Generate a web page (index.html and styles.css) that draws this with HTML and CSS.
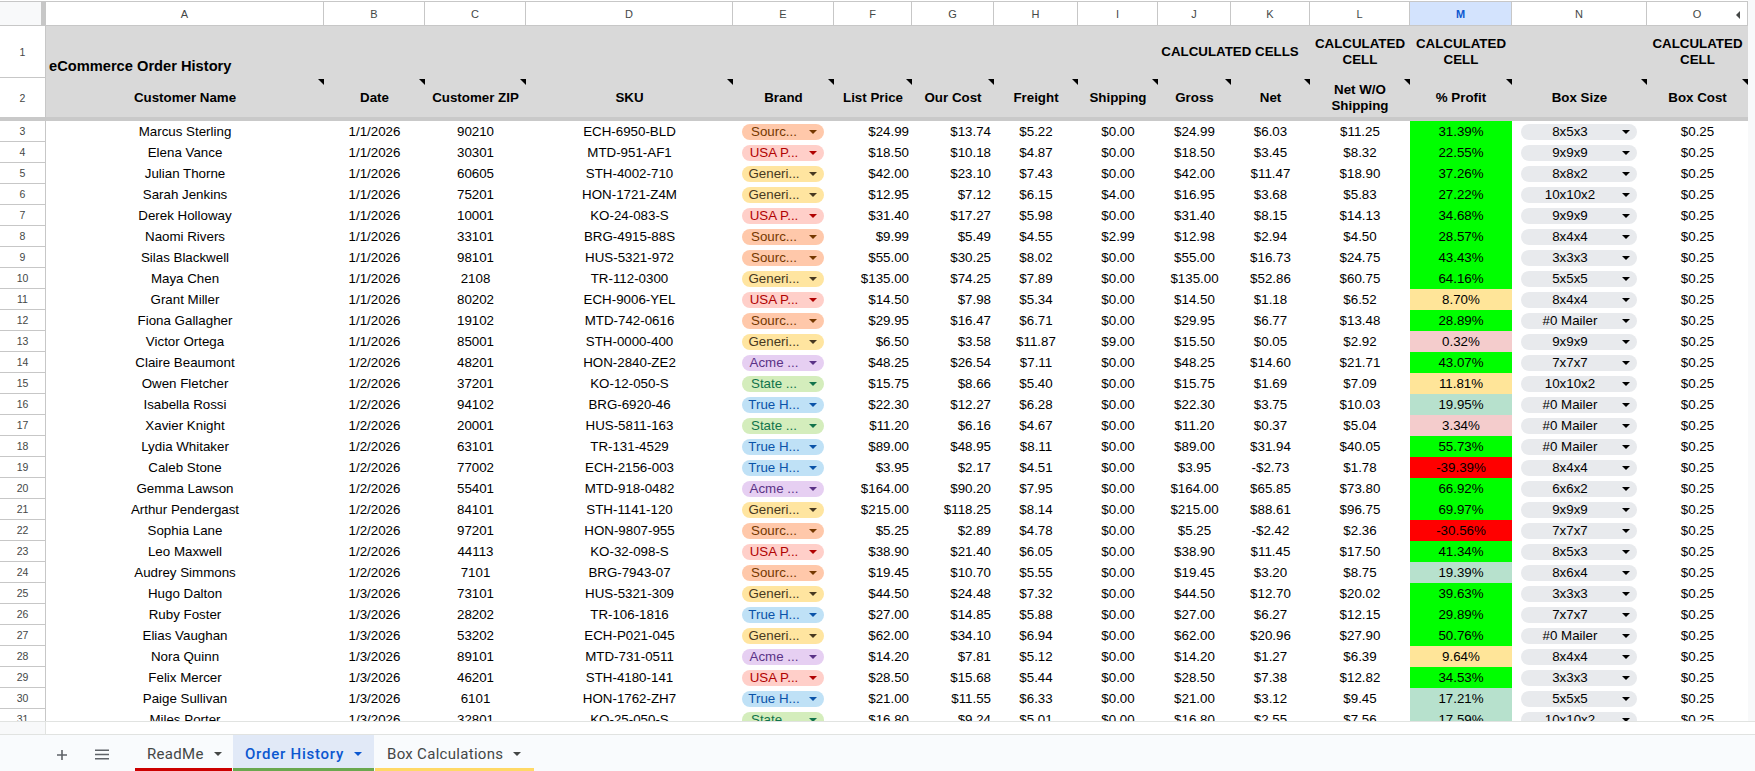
FILE: index.html
```html
<!DOCTYPE html>
<html lang="en">
<head>
<meta charset="utf-8">
<title>eCommerce Order History</title>
<link rel="stylesheet" href="styles.css">
</head>
<body>
<div class="app">
<div class="sheet-row">
<div class="sheet">
<table class="grid">
<colgroup><col class="w-gutter"><col class="w-a"><col class="w-b"><col class="w-c"><col class="w-d"><col class="w-e"><col class="w-f"><col class="w-g"><col class="w-h"><col class="w-i"><col class="w-j"><col class="w-k"><col class="w-l"><col class="w-m"><col class="w-n"><col class="w-o"></colgroup>
<thead>
<tr class="letters"><th class="corner"></th><th>A</th><th>B</th><th>C</th><th>D</th><th>E</th><th>F</th><th>G</th><th>H</th><th>I</th><th>J</th><th>K</th><th>L</th><th class="selected">M</th><th>N</th><th class="has-collapse">O</th></tr>
<tr class="banner"><th class="rownum">1</th><th class="title">eCommerce Order History</th><th colspan="8"></th><th colspan="2" class="calc calc-merged">CALCULATED CELLS</th><th class="calc">CALCULATED<br>CELL</th><th class="calc">CALCULATED<br>CELL</th><th></th><th class="calc">CALCULATED<br>CELL</th></tr>
<tr class="labels"><th class="rownum">2</th><th class="f">Customer Name</th><th class="f">Date</th><th class="f">Customer ZIP</th><th class="f">SKU</th><th class="f">Brand</th><th class="f">List Price</th><th class="f">Our Cost</th><th class="f">Freight</th><th class="f">Shipping</th><th class="f">Gross</th><th class="f">Net</th><th class="f">Net W/O<br>Shipping</th><th class="f">% Profit</th><th class="f">Box Size</th><th class="f">Box Cost</th></tr>
</thead>
<tbody>
<tr><th class="rownum">3</th><td>Marcus Sterling</td><td>1/1/2026</td><td>90210</td><td>ECH-6950-BLD</td><td><span class="chip source">Sourc...</span></td><td>$24.99</td><td>$13.74</td><td>$5.22</td><td>$0.00</td><td>$24.99</td><td>$6.03</td><td>$11.25</td><td class="hi">31.39%</td><td><span class="box">8x5x3</span></td><td>$0.25</td></tr>
<tr><th class="rownum">4</th><td>Elena Vance</td><td>1/1/2026</td><td>30301</td><td>MTD-951-AF1</td><td><span class="chip usa">USA P...</span></td><td>$18.50</td><td>$10.18</td><td>$4.87</td><td>$0.00</td><td>$18.50</td><td>$3.45</td><td>$8.32</td><td class="hi">22.55%</td><td><span class="box">9x9x9</span></td><td>$0.25</td></tr>
<tr><th class="rownum">5</th><td>Julian Thorne</td><td>1/1/2026</td><td>60605</td><td>STH-4002-710</td><td><span class="chip generic">Generi...</span></td><td>$42.00</td><td>$23.10</td><td>$7.43</td><td>$0.00</td><td>$42.00</td><td>$11.47</td><td>$18.90</td><td class="hi">37.26%</td><td><span class="box">8x8x2</span></td><td>$0.25</td></tr>
<tr><th class="rownum">6</th><td>Sarah Jenkins</td><td>1/1/2026</td><td>75201</td><td>HON-1721-Z4M</td><td><span class="chip generic">Generi...</span></td><td>$12.95</td><td>$7.12</td><td>$6.15</td><td>$4.00</td><td>$16.95</td><td>$3.68</td><td>$5.83</td><td class="hi">27.22%</td><td><span class="box">10x10x2</span></td><td>$0.25</td></tr>
<tr><th class="rownum">7</th><td>Derek Holloway</td><td>1/1/2026</td><td>10001</td><td>KO-24-083-S</td><td><span class="chip usa">USA P...</span></td><td>$31.40</td><td>$17.27</td><td>$5.98</td><td>$0.00</td><td>$31.40</td><td>$8.15</td><td>$14.13</td><td class="hi">34.68%</td><td><span class="box">9x9x9</span></td><td>$0.25</td></tr>
<tr><th class="rownum">8</th><td>Naomi Rivers</td><td>1/1/2026</td><td>33101</td><td>BRG-4915-88S</td><td><span class="chip source">Sourc...</span></td><td>$9.99</td><td>$5.49</td><td>$4.55</td><td>$2.99</td><td>$12.98</td><td>$2.94</td><td>$4.50</td><td class="hi">28.57%</td><td><span class="box">8x4x4</span></td><td>$0.25</td></tr>
<tr><th class="rownum">9</th><td>Silas Blackwell</td><td>1/1/2026</td><td>98101</td><td>HUS-5321-972</td><td><span class="chip source">Sourc...</span></td><td>$55.00</td><td>$30.25</td><td>$8.02</td><td>$0.00</td><td>$55.00</td><td>$16.73</td><td>$24.75</td><td class="hi">43.43%</td><td><span class="box">3x3x3</span></td><td>$0.25</td></tr>
<tr><th class="rownum">10</th><td>Maya Chen</td><td>1/1/2026</td><td>2108</td><td>TR-112-0300</td><td><span class="chip generic">Generi...</span></td><td>$135.00</td><td>$74.25</td><td>$7.89</td><td>$0.00</td><td>$135.00</td><td>$52.86</td><td>$60.75</td><td class="hi">64.16%</td><td><span class="box">5x5x5</span></td><td>$0.25</td></tr>
<tr><th class="rownum">11</th><td>Grant Miller</td><td>1/1/2026</td><td>80202</td><td>ECH-9006-YEL</td><td><span class="chip usa">USA P...</span></td><td>$14.50</td><td>$7.98</td><td>$5.34</td><td>$0.00</td><td>$14.50</td><td>$1.18</td><td>$6.52</td><td class="mid">8.70%</td><td><span class="box">8x4x4</span></td><td>$0.25</td></tr>
<tr><th class="rownum">12</th><td>Fiona Gallagher</td><td>1/1/2026</td><td>19102</td><td>MTD-742-0616</td><td><span class="chip source">Sourc...</span></td><td>$29.95</td><td>$16.47</td><td>$6.71</td><td>$0.00</td><td>$29.95</td><td>$6.77</td><td>$13.48</td><td class="hi">28.89%</td><td><span class="box">#0 Mailer</span></td><td>$0.25</td></tr>
<tr><th class="rownum">13</th><td>Victor Ortega</td><td>1/1/2026</td><td>85001</td><td>STH-0000-400</td><td><span class="chip generic">Generi...</span></td><td>$6.50</td><td>$3.58</td><td>$11.87</td><td>$9.00</td><td>$15.50</td><td>$0.05</td><td>$2.92</td><td class="low">0.32%</td><td><span class="box">9x9x9</span></td><td>$0.25</td></tr>
<tr><th class="rownum">14</th><td>Claire Beaumont</td><td>1/2/2026</td><td>48201</td><td>HON-2840-ZE2</td><td><span class="chip acme">Acme ...</span></td><td>$48.25</td><td>$26.54</td><td>$7.11</td><td>$0.00</td><td>$48.25</td><td>$14.60</td><td>$21.71</td><td class="hi">43.07%</td><td><span class="box">7x7x7</span></td><td>$0.25</td></tr>
<tr><th class="rownum">15</th><td>Owen Fletcher</td><td>1/2/2026</td><td>37201</td><td>KO-12-050-S</td><td><span class="chip state">State ...</span></td><td>$15.75</td><td>$8.66</td><td>$5.40</td><td>$0.00</td><td>$15.75</td><td>$1.69</td><td>$7.09</td><td class="mid">11.81%</td><td><span class="box">10x10x2</span></td><td>$0.25</td></tr>
<tr><th class="rownum">16</th><td>Isabella Rossi</td><td>1/2/2026</td><td>94102</td><td>BRG-6920-46</td><td><span class="chip true">True H...</span></td><td>$22.30</td><td>$12.27</td><td>$6.28</td><td>$0.00</td><td>$22.30</td><td>$3.75</td><td>$10.03</td><td class="ok">19.95%</td><td><span class="box">#0 Mailer</span></td><td>$0.25</td></tr>
<tr><th class="rownum">17</th><td>Xavier Knight</td><td>1/2/2026</td><td>20001</td><td>HUS-5811-163</td><td><span class="chip state">State ...</span></td><td>$11.20</td><td>$6.16</td><td>$4.67</td><td>$0.00</td><td>$11.20</td><td>$0.37</td><td>$5.04</td><td class="low">3.34%</td><td><span class="box">#0 Mailer</span></td><td>$0.25</td></tr>
<tr><th class="rownum">18</th><td>Lydia Whitaker</td><td>1/2/2026</td><td>63101</td><td>TR-131-4529</td><td><span class="chip true">True H...</span></td><td>$89.00</td><td>$48.95</td><td>$8.11</td><td>$0.00</td><td>$89.00</td><td>$31.94</td><td>$40.05</td><td class="hi">55.73%</td><td><span class="box">#0 Mailer</span></td><td>$0.25</td></tr>
<tr><th class="rownum">19</th><td>Caleb Stone</td><td>1/2/2026</td><td>77002</td><td>ECH-2156-003</td><td><span class="chip true">True H...</span></td><td>$3.95</td><td>$2.17</td><td>$4.51</td><td>$0.00</td><td>$3.95</td><td>-$2.73</td><td>$1.78</td><td class="loss">-39.39%</td><td><span class="box">8x4x4</span></td><td>$0.25</td></tr>
<tr><th class="rownum">20</th><td>Gemma Lawson</td><td>1/2/2026</td><td>55401</td><td>MTD-918-0482</td><td><span class="chip acme">Acme ...</span></td><td>$164.00</td><td>$90.20</td><td>$7.95</td><td>$0.00</td><td>$164.00</td><td>$65.85</td><td>$73.80</td><td class="hi">66.92%</td><td><span class="box">6x6x2</span></td><td>$0.25</td></tr>
<tr><th class="rownum">21</th><td>Arthur Pendergast</td><td>1/2/2026</td><td>84101</td><td>STH-1141-120</td><td><span class="chip generic">Generi...</span></td><td>$215.00</td><td>$118.25</td><td>$8.14</td><td>$0.00</td><td>$215.00</td><td>$88.61</td><td>$96.75</td><td class="hi">69.97%</td><td><span class="box">9x9x9</span></td><td>$0.25</td></tr>
<tr><th class="rownum">22</th><td>Sophia Lane</td><td>1/2/2026</td><td>97201</td><td>HON-9807-955</td><td><span class="chip source">Sourc...</span></td><td>$5.25</td><td>$2.89</td><td>$4.78</td><td>$0.00</td><td>$5.25</td><td>-$2.42</td><td>$2.36</td><td class="loss">-30.56%</td><td><span class="box">7x7x7</span></td><td>$0.25</td></tr>
<tr><th class="rownum">23</th><td>Leo Maxwell</td><td>1/2/2026</td><td>44113</td><td>KO-32-098-S</td><td><span class="chip usa">USA P...</span></td><td>$38.90</td><td>$21.40</td><td>$6.05</td><td>$0.00</td><td>$38.90</td><td>$11.45</td><td>$17.50</td><td class="hi">41.34%</td><td><span class="box">8x5x3</span></td><td>$0.25</td></tr>
<tr><th class="rownum">24</th><td>Audrey Simmons</td><td>1/2/2026</td><td>7101</td><td>BRG-7943-07</td><td><span class="chip source">Sourc...</span></td><td>$19.45</td><td>$10.70</td><td>$5.55</td><td>$0.00</td><td>$19.45</td><td>$3.20</td><td>$8.75</td><td class="ok">19.39%</td><td><span class="box">8x6x4</span></td><td>$0.25</td></tr>
<tr><th class="rownum">25</th><td>Hugo Dalton</td><td>1/3/2026</td><td>73101</td><td>HUS-5321-309</td><td><span class="chip generic">Generi...</span></td><td>$44.50</td><td>$24.48</td><td>$7.32</td><td>$0.00</td><td>$44.50</td><td>$12.70</td><td>$20.02</td><td class="hi">39.63%</td><td><span class="box">3x3x3</span></td><td>$0.25</td></tr>
<tr><th class="rownum">26</th><td>Ruby Foster</td><td>1/3/2026</td><td>28202</td><td>TR-106-1816</td><td><span class="chip true">True H...</span></td><td>$27.00</td><td>$14.85</td><td>$5.88</td><td>$0.00</td><td>$27.00</td><td>$6.27</td><td>$12.15</td><td class="hi">29.89%</td><td><span class="box">7x7x7</span></td><td>$0.25</td></tr>
<tr><th class="rownum">27</th><td>Elias Vaughan</td><td>1/3/2026</td><td>53202</td><td>ECH-P021-045</td><td><span class="chip generic">Generi...</span></td><td>$62.00</td><td>$34.10</td><td>$6.94</td><td>$0.00</td><td>$62.00</td><td>$20.96</td><td>$27.90</td><td class="hi">50.76%</td><td><span class="box">#0 Mailer</span></td><td>$0.25</td></tr>
<tr><th class="rownum">28</th><td>Nora Quinn</td><td>1/3/2026</td><td>89101</td><td>MTD-731-0511</td><td><span class="chip acme">Acme ...</span></td><td>$14.20</td><td>$7.81</td><td>$5.12</td><td>$0.00</td><td>$14.20</td><td>$1.27</td><td>$6.39</td><td class="mid">9.64%</td><td><span class="box">8x4x4</span></td><td>$0.25</td></tr>
<tr><th class="rownum">29</th><td>Felix Mercer</td><td>1/3/2026</td><td>46201</td><td>STH-4180-141</td><td><span class="chip usa">USA P...</span></td><td>$28.50</td><td>$15.68</td><td>$5.44</td><td>$0.00</td><td>$28.50</td><td>$7.38</td><td>$12.82</td><td class="hi">34.53%</td><td><span class="box">3x3x3</span></td><td>$0.25</td></tr>
<tr><th class="rownum">30</th><td>Paige Sullivan</td><td>1/3/2026</td><td>6101</td><td>HON-1762-ZH7</td><td><span class="chip true">True H...</span></td><td>$21.00</td><td>$11.55</td><td>$6.33</td><td>$0.00</td><td>$21.00</td><td>$3.12</td><td>$9.45</td><td class="ok">17.21%</td><td><span class="box">5x5x5</span></td><td>$0.25</td></tr>
<tr><th class="rownum">31</th><td>Miles Porter</td><td>1/3/2026</td><td>32801</td><td>KO-25-050-S</td><td><span class="chip state">State ...</span></td><td>$16.80</td><td>$9.24</td><td>$5.01</td><td>$0.00</td><td>$16.80</td><td>$2.55</td><td>$7.56</td><td class="ok">17.59%</td><td><span class="box">10x10x2</span></td><td>$0.25</td></tr>
</tbody>
</table>
</div>
<div class="vscroll"></div>
</div>
<div class="hscroll"><div class="hscroll-gutter"></div></div>
<nav class="tabbar">
<div class="tool-group">
<svg class="tool" viewBox="0 0 10 10" width="10" height="10" aria-hidden="true"><path d="M4.2 0h1.6v4.2H10v1.6H5.8V10H4.2V5.8H0V4.2h4.2z"/></svg>
<svg class="tool" viewBox="0 0 14 11" width="14" height="11" aria-hidden="true"><path d="M0 .5h14V2H0zM0 4.8h14v1.5H0zM0 9h14v1.5H0z"/></svg>
</div>
<div class="tab tab-red">ReadMe<span class="tab-arrow"></span></div>
<div class="tab tab-green active">Order History<span class="tab-arrow"></span></div>
<div class="tab tab-yellow">Box Calculations<span class="tab-arrow"></span></div>
</nav>
</div>
</body>
</html>
```

FILE: styles.css
```css
* { box-sizing: border-box; }
html, body { margin: 0; height: 100%; background: #fff; overflow: hidden; }
body { font-family: "Liberation Sans", Arial, sans-serif; font-size: 13.33px; color: #000; }

.app { display: flex; flex-direction: column; height: 100vh; }
.sheet-row { display: flex; height: 721px; }
.sheet { width: 1748px; padding-top: 1px; overflow: hidden; }
.vscroll { flex: 1; background: #f8f9fa; }
.hscroll { display: flex; height: 14px; border-top: 1px solid #e1e3e1; border-bottom: 1px solid #e1e3e1; }
.hscroll-gutter { width: 46px; background: #f8f9fa; border-right: 1px solid #e1e3e1; }

.grid { table-layout: fixed; border-collapse: separate; border-spacing: 0; width: 1748px; }
.w-gutter { width: 46px; } .w-a { width: 278px; } .w-b { width: 101px; } .w-c { width: 101px; }
.w-d { width: 207px; } .w-e { width: 101px; } .w-f { width: 78px; } .w-g { width: 82px; }
.w-h { width: 84px; } .w-i { width: 80px; } .w-j { width: 73px; } .w-k { width: 79px; }
.w-l { width: 100px; } .w-m { width: 102px; } .w-n { width: 135px; } .w-o { width: 101px; }

.letters th { height: 25px; padding: 0; border-top: 1px solid #c7c7c7; border-bottom: 1px solid #c7c7c7; border-right: 1px solid #c7c7c7; font-size: 11px; font-weight: 400; color: #444746; background: #fff; }
.letters .corner { background: #f8f9fa; border-right: 5px solid #c7c7c7; }
.letters .selected { background: #d3e3fd; color: #0b57d0; font-weight: 700; }
.letters .has-collapse { position: relative; }
.letters .has-collapse::after { content: ""; position: absolute; right: 7px; top: 9px; border: 4px solid transparent; border-left: 0; border-right: 4px solid #444746; }

.banner th { height: 52px; padding: 0 2px; background: #d9d9d9; font-weight: 700; line-height: 16px; font-size: 13.33px; }
.banner .title { text-align: left; vertical-align: bottom; font-size: 14.67px; padding: 0 3px 4px; }
.banner .calc-merged { padding-right: 10px; }
.labels th { height: 43px; padding: 0 3px; background: #d9d9d9; border-bottom: 4px solid #c9c9c9; font-weight: 700; line-height: 16px; position: relative; }
.labels .f::after { content: ""; position: absolute; top: 1px; right: 0; width: 6px; height: 6px; background: #000; clip-path: polygon(0 0, 100% 0, 100% 100%); }

.banner .rownum, .labels .rownum, tbody .rownum { background: #fff; border-right: 1px solid #c7c7c7; border-bottom: 1px solid #c7c7c7; color: #444746; font-size: 10.5px; font-weight: 400; padding: 0; }
.labels .rownum { border-bottom-width: 4px; border-bottom-color: #c9c9c9; }

tbody td { height: 21px; padding: 0 3px; text-align: center; line-height: 16px; white-space: nowrap; overflow: hidden; }
tbody td:nth-child(7), tbody td:nth-child(8) { text-align: right; }

.hi { background: #00ff00; }
.mid { background: #ffe599; }
.ok { background: #b7e1cd; }
.low { background: #f4cccc; }
.loss { background: #ff0000; }

.chip, .box { display: flex; align-items: center; justify-content: center; height: 16px; border-radius: 8px; position: relative; margin-left: 6px; line-height: 16px; padding-right: 18px; }
.chip { width: 82px; }
.box { width: 116px; background: #e8eaed; color: #000; }
.chip::after, .box::after { content: ""; position: absolute; right: 7px; top: 6px; border-left: 4px solid transparent; border-right: 4px solid transparent; border-top: 4px solid currentColor; }
.source { background: #ffc8aa; color: #753800; }
.usa { background: #ffcfc9; color: #b10202; }
.generic { background: #ffe5a0; color: #473821; }
.acme { background: #e6cff2; color: #5a3286; }
.state { background: #d4edbc; color: #11734b; }
.true { background: #bfe1f6; color: #0a53a8; }

.tabbar { flex: 1; display: flex; align-items: stretch; background: #f9fbfd; padding-left: 135px; position: relative; }
.tool-group { position: absolute; left: 57px; top: 14px; display: flex; align-items: center; gap: 28px; }
.tool { fill: #5f6368; display: block; }
.tab { display: flex; align-items: center; gap: 10px; padding: 5px 0 0 12px; margin-right: 1px; font-family: Roboto, sans-serif; font-size: 15px; font-weight: 400; letter-spacing: .3px; color: #444746; border-bottom: 3px solid transparent; white-space: nowrap; }
.tab-arrow { width: 0; height: 0; border-left: 4px solid transparent; border-right: 4px solid transparent; border-top: 4px solid currentColor; }
.tab-red { width: 97px; border-bottom-color: #cc0000; }
.tab-green { width: 141px; border-bottom-color: #6aa84f; }
.tab-yellow { width: 159px; border-bottom-color: #ffd966; }
.tab.active { background: #e1e9f7; color: #0b57d0; font-weight: 500; letter-spacing: .75px; }
```
